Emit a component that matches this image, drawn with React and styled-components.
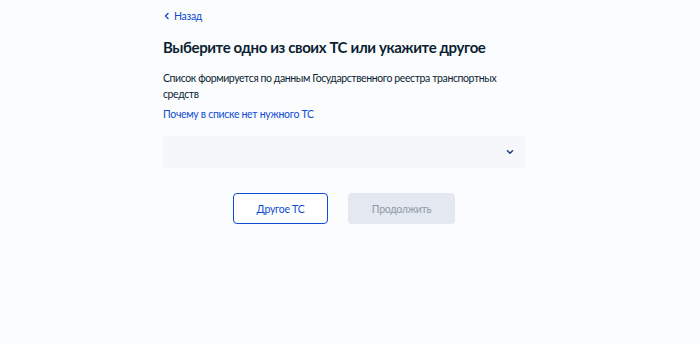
import React from "react";
import styled, { createGlobalStyle } from "styled-components";

const GlobalStyle = createGlobalStyle`
  html, body {
    margin: 0;
    padding: 0;
    background: #fbfcfe;
    font-family: "Lato", "Noto Sans", sans-serif;
    color: #0b1f33;
  }
`;

export default function App() {
  return (
    <Page>
      <GlobalStyle />
      <Column>
        <BackLink href="#">
          <svg width="8" height="8" viewBox="0 0 8 8">
            <path d="M5 1.5 L2.5 4 L5 6.5" fill="none" stroke="#0d4cd3" strokeWidth="1.4" strokeLinecap="round" strokeLinejoin="round" />
          </svg>
          Назад
        </BackLink>
        <Title>Выберите одно из своих ТС или укажите другое</Title>
        <Text>Список формируется по данным Государственного реестра транспортных средств</Text>
        <Link href="#">Почему в списке нет нужного ТС</Link>
        <Select>
          <svg width="10" height="10" viewBox="0 0 10 10">
            <path d="M2.5 3.8 L5 6.2 L7.5 3.8" fill="none" stroke="#1f3a7a" strokeWidth="1.5" strokeLinecap="round" strokeLinejoin="round" />
          </svg>
        </Select>
        <Buttons>
          <Button>Другое ТС</Button>
          <Button disabled $primary>Продолжить</Button>
        </Buttons>
      </Column>
    </Page>
  );
}

const Page = styled.div`
  min-height: 344px;
  padding-right: 12px;
`;

const Column = styled.div`
  width: 362px;
  margin: 0 auto;
  padding-top: 9px;
  display: flex;
  flex-direction: column;
`;

const BackLink = styled.a`
  display: flex;
  align-items: center;
  gap: 3px;
  font-size: 10.5px;
  letter-spacing: -0.3px;
  line-height: 14px;
  color: #0d4cd3;
  text-decoration: none;
`;

const Title = styled.h1`
  margin: 14px 0 0;
  font-size: 15px;
  letter-spacing: -0.4px;
  line-height: 20px;
  font-weight: 700;
  color: #0b1f33;
`;

const Text = styled.p`
  margin: 13px 0 0;
  max-width: 345px;
  font-size: 10.5px;
  letter-spacing: -0.4px;
  line-height: 16px;
  color: #0b1f33;
`;

const Link = styled.a`
  margin-top: 4px;
  font-size: 10.5px;
  letter-spacing: -0.3px;
  line-height: 16px;
  color: #0d4cd3;
  text-decoration: none;
`;

const Select = styled.div`
  margin-top: 14px;
  height: 32px;
  background: #f5f7fa;
  border-radius: 4px;
  display: flex;
  align-items: center;
  justify-content: flex-end;
  padding-right: 10px;
`;

const Buttons = styled.div`
  margin-top: 25px;
  display: flex;
  justify-content: center;
  gap: 20px;
`;

const Button = styled.button`
  height: 31px;
  box-sizing: border-box;
  border-radius: 4px;
  font-family: "Lato", "Noto Sans", sans-serif;
  font-size: 10.5px;
  letter-spacing: -0.3px;
  padding: 0;
  width: ${(p) => (p.$primary ? "107px" : "95px")};
  border: ${(p) => (p.$primary ? "none" : "1.5px solid #0d4cd3")};
  background: ${(p) => (p.$primary ? "#e4e8f0" : "#ffffff")};
  color: ${(p) => (p.$primary ? "#8d98a6" : "#0d4cd3")};
`;
